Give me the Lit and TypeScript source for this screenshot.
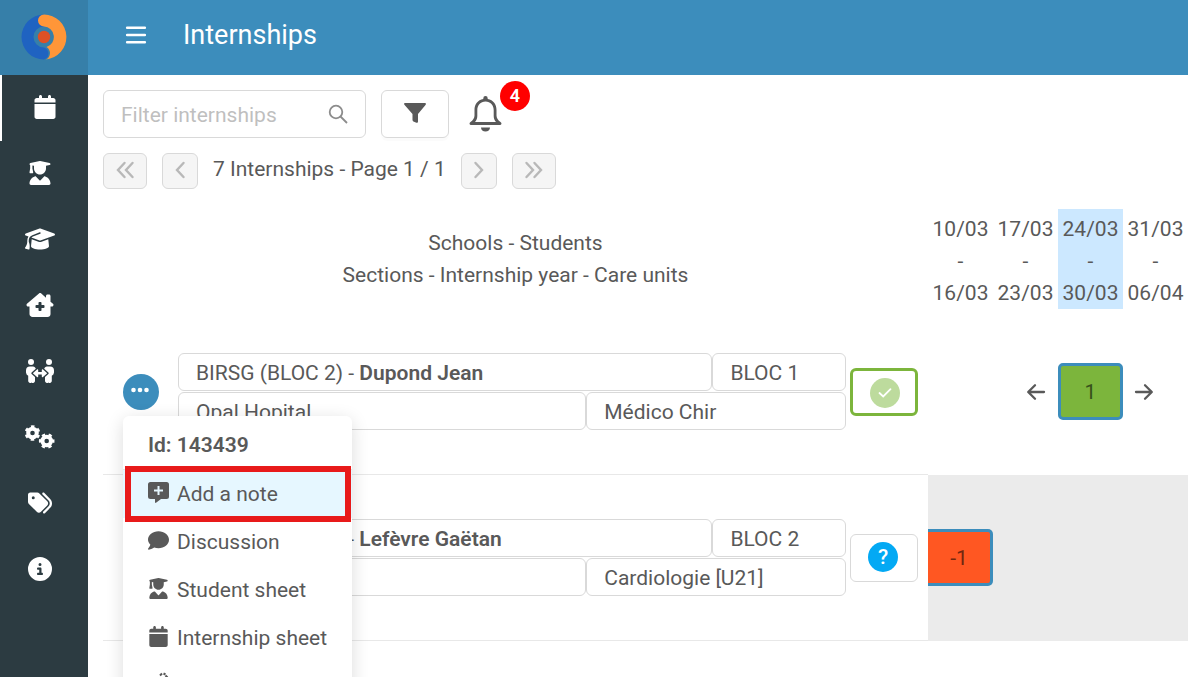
import { LitElement, html, css, svg } from "lit";
import { customElement, property } from "lit/decorators.js";
import { classMap } from "lit/directives/class-map.js";

const icons: Record<string, { box: string; body: unknown }> = {
  calendar: {
    box: "0 0 448 512",
    body: svg`<path d="M96 32V64H48C21.500 64 0 85.500 0 112v48H448V112c0-26.500-21.500-48-48-48H352V32c0-17.700-14.300-32-32-32s-32 14.300-32 32V64H160V32c0-17.700-14.300-32-32-32S96 14.300 96 32zM448 192H0V464c0 26.500 21.500 48 48 48H400c26.500 0 48-21.500 48-48V192z"/>`,
  },
  student: {
    box: "0 0 448 512",
    body: svg`<path d="M219.300 .500c3.100-.600 6.300-.600 9.400 0l200 40C439.900 42.700 448 52.600 448 64s-8.100 21.300-19.300 23.500L352 102.900V160c0 70.700-57.300 128-128 128S96 230.700 96 160V102.900L62 96v62.400l17 82.400c.9 4.700-.3 9.600-3.300 13.300s-7.600 5.900-12.400 5.900H16c-4.800 0-9.300-2.100-12.400-5.900s-4.300-8.600-3.300-13.300L14 158.400V86.600C4.500 83.300 0 74.300 0 64C0 52.600 8.100 42.700 19.300 40.500l200-40zM111.900 328.700c10.500-3.400 21.800 .400 29.400 8.500l71 75.500c6.300 6.700 17 6.700 23.300 0l71-75.500c7.600-8.100 18.900-11.900 29.400-8.500C401 348.600 448 409.400 448 481.300c0 17-13.800 30.700-30.700 30.700H30.700C13.800 512 0 498.200 0 481.300c0-71.900 47-132.700 111.900-152.600z"/>`,
  },
  cap: {
    box: "0 0 640 512",
    body: svg`<path d="M320 32c-8.100 0-16.100 1.400-23.700 4.100L15.800 137.400C6.300 140.900 0 149.900 0 160s6.300 19.100 15.800 22.600l57.900 20.900C57.300 229.300 48 259.800 48 291.900v28.100c0 28.400-10.800 57.700-22.300 80.800c-6.500 13-13.900 25.800-22.500 37.600C0 442.700-.900 448.300 .900 453.400s6 8.900 11.200 10.200l64 16c4.200 1.100 8.700 .300 12.400-2s6.300-6.100 7.100-10.400c8.600-42.800 4.300-81.200-2.100-108.700C90.300 344.300 86 329.800 80 316.500V291.900c0-30.200 10.200-58.700 27.900-81.500c12.900-15.500 29.600-28 49.200-35.700l157-61.700c8.200-3.200 17.500 .800 20.700 9s-.800 17.500-9 20.700l-157 61.700c-12.400 4.900-23.300 12.400-32.200 21.600l159.600 57.600c7.600 2.700 15.600 4.100 23.700 4.100s16.100-1.400 23.700-4.100L624.200 182.600c9.500-3.400 15.800-12.500 15.800-22.600s-6.300-19.100-15.800-22.600L343.700 36.100C336.100 33.400 328.100 32 320 32zM128 408c0 35.300 86 72 192 72s192-36.700 192-72L496.700 262.600 354.500 314c-11.100 4-22.800 6-34.500 6s-23.500-2-34.500-6L143.300 262.600 128 408z"/>`,
  },
  house: {
    box: "0 0 576 512",
    body: svg`<path fill-rule="evenodd" d="M543.800 287.600c17 0 32-14 32-32.100 1-9-3-17-11-24L512 185V64c0-17.700-14.300-32-32-32H448c-17.700 0-32 14.300-32 32v36.700L309.500 7c-6-5-14-7-21-7s-15 1-22 8L10 231.500c-7 7-10 15-10 24 0 18 14 32.100 32 32.100h32V448c0 35.300 28.700 64 64 64H448.500c35.500 0 64.200-28.800 64-64.300l-.700-160.200h32zM256 208c0-8.800 7.200-16 16-16h32c8.800 0 16 7.200 16 16v48h48c8.800 0 16 7.200 16 16v32c0 8.800-7.200 16-16 16H320v48c0 8.800-7.200 16-16 16H272c-8.800 0-16-7.200-16-16V320H208c-8.800 0-16-7.200-16-16V272c0-8.800 7.200-16 16-16h48V208z"/>`,
  },
  people: {
    box: "0 0 28 24",
    body: svg`<circle cx="5" cy="3" r="3"/><circle cx="23" cy="3" r="3"/><path d="M4 7.500h3c1.500 0 2.500 1 2.800 2.300L5.600 13.500a1 1 0 0 0 0 1.400L9 18v4a2 2 0 0 1-3.400 1.400A2 2 0 0 1 2.200 22v-5.200A4 4 0 0 1 0 13.500v-2a4 4 0 0 1 4-4zM24 7.500h-3c-1.500 0-2.500 1-2.800 2.300l4.200 3.700a1 1 0 0 1 0 1.400L19 18v4a2 2 0 0 0 3.400 1.400A2 2 0 0 0 25.800 22v-5.200a4 4 0 0 0 2.200-3.300v-2a4 4 0 0 0-4-4z"/><path d="M6.800 14.200 11 10.400c.600-.500 1.200-.200 1.200.500V13h3.600v-2.100c0-.700.600-1 1.200-.500l4.200 3.800L17 18c-.600.500-1.200.200-1.200-.500v-2.100h-3.600v2.100c0 .700-.600 1-1.200.500z"/>`,
  },
  gears: {
    box: "0 0 30 24",
    body: svg`<g fill="none" stroke="currentColor"><circle cx="7.500" cy="8" r="4.300" stroke-width="4"/><circle cx="7.500" cy="8" r="6.600" stroke-width="2.400" stroke-dasharray="3.400 3.510" stroke-dashoffset="1.700" transform="rotate(30 7.500 8)"/><circle cx="21.700" cy="16" r="4.300" stroke-width="4"/><circle cx="21.700" cy="16" r="6.600" stroke-width="2.400" stroke-dasharray="3.400 3.510" stroke-dashoffset="1.700"/></g>`,
  },
  tags: {
    box: "0 -32 512 512",
    body: svg`<path d="M345 7.300 472.800 136.600c52.400 53 52.400 138.200 0 191.200L360.800 441c-9.300 9.400-24.500 9.500-33.900.200s-9.500-24.500-.200-33.900L438.600 294.100c33.900-34.300 33.900-89.400 0-123.700L310.900 41c-9.300-9.400-9.200-24.600.200-33.900S335.700-2.200 345 7.300zM0 197.500V48C0 21.500 21.500 0 48 0h149.500c17 0 33.300 6.700 45.300 18.700l168 168c25 25 25 65.500 0 90.500L277.300 410.700c-25 25-65.500 25-90.500 0l-168-168C6.700 230.700 0 214.500 0 197.500zM144 112a32 32 0 1 0-64 0 32 32 0 1 0 64 0z" fill-rule="evenodd"/>`,
  },
  info: {
    box: "0 0 512 512",
    body: svg`<path fill-rule="evenodd" d="M256 512A256 256 0 1 0 256 0a256 256 0 1 0 0 512zM216 336h24V272H216c-13.300 0-24-10.700-24-24s10.700-24 24-24h48c13.300 0 24 10.700 24 24v88h8c13.300 0 24 10.700 24 24s-10.700 24-24 24H216c-13.300 0-24-10.700-24-24s10.700-24 24-24zm40-208a32 32 0 1 1 0 64 32 32 0 1 1 0-64z"/>`,
  },
  bars: {
    box: "0 0 18 18",
    body: svg`<path d="M1 2.500h16M1 9h16M1 15.500h16" fill="none" stroke="currentColor" stroke-width="2.200" stroke-linecap="round"/>`,
  },
  search: {
    box: "0 0 20 20",
    body: svg`<g fill="none" stroke="currentColor" stroke-width="1.800"><circle cx="8" cy="8" r="6.300"/><path d="m12.500 12.500 6.500 6.500"/></g>`,
  },
  filter: {
    box: "0 0 22 20",
    body: svg`<path d="M1 0h20c1 0 1.200.900.700 1.700L14 11v7.500c0 1-.700 1.500-1.600 1.200l-3-1.200c-.600-.300-.9-.700-.9-1.400V11L.4 1.700C-.2.900 0 0 1 0z"/>`,
  },
  bell: {
    box: "0 0 32 36",
    body: svg`<path d="M16 0a2.200 2.200 0 0 0-2.200 2.200v.8C8.200 4 5 8.500 5 14v5.500c0 2.600-1.400 4.700-4.300 6.800-1.200 1-.7 2.700.8 2.700h29c1.500 0 2-1.700.8-2.700-2.900-2.100-4.300-4.200-4.300-6.800V14c0-5.500-3.200-10-8.800-11v-.8A2.200 2.200 0 0 0 16 0zm0 5.500c5 0 8.200 3.700 8.200 8.500v6c0 2.300.8 4.300 2.300 6h-21c1.500-1.700 2.300-3.700 2.300-6v-6c0-4.800 3.200-8.500 8.200-8.500zM11.500 31.500h9c0 2.500-2 4-4.500 4s-4.500-1.500-4.500-4z" fill-rule="evenodd"/>`,
  },
  left: {
    box: "0 0 10 18",
    body: svg`<path d="M8.500 2 2 9l6.500 7" fill="none" stroke="currentColor" stroke-width="2.400" stroke-linecap="round"/>`,
  },
  right: {
    box: "0 0 10 18",
    body: svg`<path d="M1.500 2 8 9l-6.500 7" fill="none" stroke="currentColor" stroke-width="2.400" stroke-linecap="round"/>`,
  },
  first: {
    box: "0 0 18 18",
    body: svg`<path d="M8.500 2 2 9l6.500 7M16.500 2 10 9l6.500 7" fill="none" stroke="currentColor" stroke-width="2.400" stroke-linecap="round"/>`,
  },
  last: {
    box: "0 0 18 18",
    body: svg`<path d="M1.500 2 8 9l-6.500 7M9.500 2 16 9l-6.500 7" fill="none" stroke="currentColor" stroke-width="2.400" stroke-linecap="round"/>`,
  },
  back: {
    box: "0 0 18 16",
    body: svg`<path d="M17 8H1.500M8 1.200 1.200 8 8 14.800" fill="none" stroke="currentColor" stroke-width="2.300" stroke-linecap="round" stroke-linejoin="round"/>`,
  },
  forward: {
    box: "0 0 18 16",
    body: svg`<path d="M1 8h15.500M10 1.200 16.800 8 10 14.800" fill="none" stroke="currentColor" stroke-width="2.300" stroke-linecap="round" stroke-linejoin="round"/>`,
  },
  dots: {
    box: "0 0 18 6",
    body: svg`<circle cx="2.500" cy="3" r="2.300"/><circle cx="9" cy="3" r="2.300"/><circle cx="15.500" cy="3" r="2.300"/>`,
  },
  check: {
    box: "0 0 14 10",
    body: svg`<path d="m1.500 5 3.700 3.500 7.300-7.300" fill="none" stroke="currentColor" stroke-width="1.800" stroke-linecap="round"/>`,
  },
  note: {
    box: "0 0 21 21",
    body: svg`<path fill-rule="evenodd" d="M2.500 0h16A2.500 2.500 0 0 1 21 2.500v12a2.500 2.500 0 0 1-2.500 2.500H13l-5 3.800c-.5.300-1 0-1-.5V17H2.500A2.500 2.500 0 0 1 0 14.500v-12A2.500 2.500 0 0 1 2.500 0zM9.500 4v3.500H6v2h3.500V13h2V9.500H15v-2h-3.500V4z"/>`,
  },
  comment: {
    box: "0 0 512 450",
    body: svg`<path d="M512 208c0 114.900-114.600 208-256 208-37.100 0-72.300-6.400-104.100-17.900-11.900 8.700-31.300 20.600-54.300 30.600C73.600 439.100 44.700 448 16 448c-6.500 0-12.300-3.900-14.800-9.900s-1.100-12.800 3.400-17.400c9-9.800 24-28 36.500-53.600 7.300-14.800 12.800-30.200 14.700-44.600C21.400 290.300 0 250.800 0 208 0 93.100 114.600 0 256 0s256 93.100 256 208z"/>`,
  },
  sign: {
    box: "0 0 21 21",
    body: svg`<path d="M2 19 13 4M8 19 19 5M12 1.500l2-2M15.500-.5l2 1M17.500 1.500l2 2" fill="none" stroke="currentColor" stroke-width="2"/>`,
  },
};

@customElement("app-icon")
export class AppIcon extends LitElement {
  @property() name = "";

  static styles = css`
    :host {
      display: inline-flex;
      flex: none;
    }
    .glyph {
      width: 100%;
      height: 100%;
      fill: currentColor;
      overflow: visible;
    }
  `;

  render() {
    const icon = icons[this.name];
    return icon ? html`<svg class="glyph" viewBox=${icon.box} aria-hidden="true">${icon.body}</svg>` : null;
  }
}

interface Week {
  from: string;
  to: string;
  current?: boolean;
}

interface Internship {
  section: string;
  student: string;
  year: string;
  place: string;
  unit: string;
  status: "ok" | "ask";
  open?: boolean;
}

const weeks: Week[] = [
  { from: "10/03", to: "16/03" },
  { from: "17/03", to: "23/03" },
  { from: "24/03", to: "30/03", current: true },
  { from: "31/03", to: "06/04" },
];

const internships: Internship[] = [
  { section: "BIRSG (BLOC 2)", student: "Dupond Jean", year: "BLOC 1", place: "Opal Hopital", unit: "Médico Chir", status: "ok", open: true },
  { section: "BIRSG (BLOC 2)", student: "Lefèvre Gaëtan", year: "BLOC 2", place: "", unit: "Cardiologie [U21]", status: "ask" },
];

const navigation = [
  ["calendar", "Internships"],
  ["student", "Students"],
  ["cap", "Schools"],
  ["house", "Care units"],
  ["people", "Exchanges"],
  ["gears", "Settings"],
  ["tags", "Tags"],
  ["info", "Information"],
];

const actions = [
  ["note", "Add a note"],
  ["comment", "Discussion"],
  ["student", "Student sheet"],
  ["calendar", "Internship sheet"],
];

@customElement("app-root")
export class AppRoot extends LitElement {
  static styles = css`
    :host {
      display: grid;
      grid-template-columns: 88px minmax(0, 1fr);
      grid-template-rows: 75px minmax(0, 1fr);
      height: 100vh;
      overflow: hidden;
      background: #fff;
      color: #595959;
      font-family: Roboto, "Liberation Sans", sans-serif;
      font-size: 21px;
      line-height: 32px;
    }
    * {
      box-sizing: border-box;
    }
    button,
    input {
      font: inherit;
      color: inherit;
      background: none;
      border: 0;
      margin: 0;
      padding: 0;
    }
    b {
      font-weight: 600;
    }
    .brand {
      display: flex;
      align-items: center;
      justify-content: center;
      padding: 0 1px 2px 0;
      background: #367fa9;
    }
    .logo {
      width: 46px;
      height: 46px;
    }
    .topbar {
      display: flex;
      align-items: center;
      gap: 37px;
      padding: 0 38px 6px;
      background: #3c8dbc;
      color: #fff;
    }
    .burger {
      display: flex;
    }
    .burger app-icon {
      width: 20px;
      height: 20px;
    }
    .title {
      margin: 0;
      font-size: 27px;
      font-weight: 400;
    }
    .sidebar {
      background: #2c3b41;
      color: #fff;
    }
    .nav-link {
      display: flex;
      align-items: center;
      justify-content: center;
      height: 66px;
      padding: 0 8px 2px 0;
      color: inherit;
    }
    .nav-link.active {
      padding-right: 0;
      border-left: 2px solid #fff;
    }
    .nav-link app-icon {
      width: 30px;
      height: 24px;
    }
    .content {
      min-width: 0;
      padding: 15px 0 0 15px;
    }
    .toolbar {
      display: flex;
      align-items: center;
      gap: 15px;
    }
    .search {
      display: flex;
      align-items: center;
      width: 263px;
      height: 48px;
      padding: 0 17px;
      border: 1px solid #d9d9d9;
      border-radius: 6px;
    }
    .search-input {
      flex: 1;
      min-width: 0;
      padding-top: 2px;
      outline: 0;
    }
    .search-input::placeholder {
      color: #bfbfbf;
      opacity: 1;
    }
    .search app-icon {
      width: 20px;
      height: 20px;
      color: #8c8c8c;
    }
    .filter {
      display: flex;
      align-items: center;
      justify-content: center;
      width: 68px;
      height: 48px;
      padding: 0 1px 3px 0;
      border: 1px solid #d9d9d9;
      border-radius: 6px;
      box-shadow: 0 3px 0 rgba(0, 0, 0, 0.015);
    }
    .filter app-icon {
      width: 22px;
      height: 20px;
    }
    .alerts {
      position: relative;
      display: flex;
      margin-left: 5px;
    }
    .alerts app-icon {
      width: 33px;
      height: 36px;
    }
    .count {
      position: absolute;
      left: 31px;
      top: -15px;
      width: 30px;
      height: 30px;
      border-radius: 15px;
      background: #f00;
      color: #fff;
      font-size: 18px;
      font-weight: 600;
      line-height: 30px;
      text-align: center;
    }
    .pager {
      display: flex;
      align-items: center;
      gap: 15px;
      margin-top: 15px;
    }
    .page-button {
      display: flex;
      align-items: center;
      justify-content: center;
      width: 36px;
      height: 36px;
      padding-bottom: 3px;
      border: 1px solid #d9d9d9;
      border-radius: 6px;
      background: #f5f5f5;
      color: #b8b8b8;
    }
    .page-button.wide {
      width: 44px;
    }
    .page-button app-icon {
      height: 18px;
    }
    .page-label {
      padding-bottom: 4px;
    }
    .board {
      width: 100%;
      margin-top: 20px;
      table-layout: fixed;
      border-collapse: separate;
      border-spacing: 0;
    }
    .board th,
    .board td {
      padding: 0;
      font-weight: 400;
      text-align: center;
    }
    .week-col {
      width: 65px;
    }
    .heading {
      height: 100px;
    }
    .board .week-name {
      padding: 4px 0 0;
    }
    .line {
      display: block;
    }
    .week-name.current {
      background: #cce8ff;
    }
    .board .details {
      height: 166px;
      border-bottom: 1px solid #e8e8e8;
    }
    .board .slot-cell {
      padding-bottom: 2px;
    }
    .entry {
      display: flex;
      align-items: center;
      gap: 4px;
      padding: 0 10px 0 20px;
      text-align: left;
    }
    .menu-anchor {
      position: relative;
      margin-right: 15px;
    }
    .more {
      display: flex;
      align-items: center;
      justify-content: center;
      width: 36px;
      height: 36px;
      padding: 0 2px 3px 0;
      border-radius: 18px;
      background: #3c8dbc;
      color: #fff;
    }
    .more app-icon {
      width: 18px;
      height: 6px;
    }
    .fields {
      flex: 1;
      min-width: 0;
      display: grid;
      gap: 1px;
    }
    .pair {
      display: grid;
      grid-template-columns: 4fr 1fr;
    }
    .pair.place {
      grid-template-columns: 11fr 7fr;
    }
    .field {
      min-width: 0;
      height: 38px;
      padding: 3px 17px 0;
      border: 1px solid #d9d9d9;
      border-radius: 6px;
      overflow: hidden;
      white-space: nowrap;
    }
    .state {
      display: flex;
      align-items: center;
      justify-content: center;
      width: 68px;
      height: 48px;
      padding: 0 2px 2px 0;
      border: 1px solid #d9d9d9;
      border-radius: 6px;
    }
    .state.ok {
      padding: 2px 0 0 2px;
      border: 3px solid #7cb53c;
    }
    .mark {
      display: flex;
      align-items: center;
      justify-content: center;
      width: 30px;
      height: 30px;
      border-radius: 15px;
      background: #03a9f4;
      color: #fff;
      font-weight: 500;
    }
    .ok .mark {
      background: #bddb9d;
    }
    .mark app-icon {
      width: 14px;
      height: 10px;
    }
    .shift {
      display: flex;
      width: 100%;
      padding: 0 12px;
    }
    .shift.back {
      padding-right: 13px;
      justify-content: flex-end;
    }
    .shift app-icon {
      width: 18px;
      height: 16px;
    }
    .slot {
      display: block;
      height: 57px;
      border: 3px solid #3c8dbc;
      border-radius: 5px;
      background: #7cb53c;
      color: #37511b;
      line-height: 53px;
    }
    .slot.short {
      border-left: 0;
      border-radius: 0 5px 5px 0;
      background: #ff5722;
      color: #73270f;
    }
    .closed {
      background: #ebebeb;
    }
    .menu {
      position: absolute;
      z-index: 2;
      top: 42px;
      left: 0;
      width: 229px;
      padding: 5px 0;
      border-radius: 6px;
      background: #fff;
      box-shadow: 0 4px 18px rgba(0, 0, 0, 0.14);
    }
    .menu-id {
      padding: 8px 25px;
      border-bottom: 1px solid #e8e8e8;
      font-weight: 600;
    }
    .action {
      display: flex;
      align-items: center;
      gap: 8px;
      width: 100%;
      height: 48px;
      padding: 0 25px;
      white-space: nowrap;
    }
    .action app-icon {
      width: 21px;
      height: 21px;
      margin-bottom: 2px;
    }
    .action.marked {
      position: relative;
      background: #e6f7ff;
    }
    .action.marked::after {
      content: "";
      position: absolute;
      inset: -4px 1px -4px 2px;
      border: 6px solid #e81a1a;
    }
  `;

  private menu() {
    return html`
      <div class="menu" role="menu">
        <div class="menu-id">Id: 143439</div>
        ${actions.map(
          ([icon, label], index) => html`
            <button class=${classMap({ action: true, marked: index === 0 })} role="menuitem">
              <app-icon name=${icon}></app-icon>${label}
            </button>
          `,
        )}
        <button class="action" role="menuitem" aria-label="Sign"><app-icon name="sign"></app-icon></button>
      </div>
    `;
  }

  private entry(item: Internship) {
    return html`
      <div class="entry">
        <div class="menu-anchor">
          <button class="more" aria-label="Actions"><app-icon name="dots"></app-icon></button>
          ${item.open ? this.menu() : null}
        </div>
        <div class="fields">
          <div class="pair">
            <div class="field">${item.section} - <b>${item.student}</b></div>
            <div class="field">${item.year}</div>
          </div>
          <div class="pair place">
            <div class="field">${item.place}</div>
            <div class="field">${item.unit}</div>
          </div>
        </div>
        <button class=${classMap({ state: true, ok: item.status === "ok" })} aria-label="Status">
          <span class="mark">${item.status === "ok" ? html`<app-icon name="check"></app-icon>` : "?"}</span>
        </button>
      </div>
    `;
  }

  render() {
    return html`
      <div class="brand">
        <svg class="logo" viewBox="0 0 46 46" aria-hidden="true">
          <path d="M23 .5a22.500 22.500 0 0 0 0 45a6.300 6.300 0 0 0 0-12a10.300 10.300 0 0 1 0-21z" fill="#1f63c1" />
          <path d="M23 .5a22.500 22.500 0 0 1 2 44.900c2.500-1 4-3.400 4-6.400 0-2.600-1.500-4.800-3.500-6A10.500 10.500 0 0 0 23 12.500a6 6 0 0 1 0-12z" fill="#ff9638" />
          <circle cx="23" cy="23" r="6.200" fill="#dd5126" />
        </svg>
      </div>
      <header class="topbar">
        <button class="burger" aria-label="Toggle navigation"><app-icon name="bars"></app-icon></button>
        <h1 class="title">Internships</h1>
      </header>
      <nav class="sidebar">
        ${navigation.map(
          ([icon, label], index) => html`
            <a class=${classMap({ "nav-link": true, active: index === 0 })} href="#" aria-label=${label}>
              <app-icon name=${icon}></app-icon>
            </a>
          `,
        )}
      </nav>
      <main class="content">
        <div class="toolbar">
          <label class="search">
            <input class="search-input" type="text" placeholder="Filter internships" aria-label="Filter internships" />
            <app-icon name="search"></app-icon>
          </label>
          <button class="filter" aria-label="Filters"><app-icon name="filter"></app-icon></button>
          <button class="alerts" aria-label="Notifications">
            <app-icon name="bell"></app-icon><span class="count">4</span>
          </button>
        </div>
        <div class="pager">
          <button class="page-button wide" disabled aria-label="First page"><app-icon name="first"></app-icon></button>
          <button class="page-button" disabled aria-label="Previous page"><app-icon name="left"></app-icon></button>
          <span class="page-label">7 Internships - Page 1 / 1</span>
          <button class="page-button" disabled aria-label="Next page"><app-icon name="right"></app-icon></button>
          <button class="page-button wide" disabled aria-label="Last page"><app-icon name="last"></app-icon></button>
        </div>
        <table class="board">
          <colgroup>
            <col />
            ${weeks.map(() => html`<col class="week-col" />`)}
          </colgroup>
          <thead>
            <tr>
              <th class="heading" scope="col">
                <span class="line">Schools - Students</span>
                <span class="line">Sections - Internship year - Care units</span>
              </th>
              ${weeks.map(
                (week) => html`
                  <th class=${classMap({ "week-name": true, current: !!week.current })} scope="col">
                    <span class="line">${week.from}</span>
                    <span class="line">-</span>
                    <span class="line">${week.to}</span>
                  </th>
                `,
              )}
            </tr>
          </thead>
          <tbody>
            <tr>
              <td class="details">${this.entry(internships[0])}</td>
              <td></td>
              <td><button class="shift back" aria-label="Earlier"><app-icon name="back"></app-icon></button></td>
              <td class="slot-cell"><span class="slot">1</span></td>
              <td><button class="shift" aria-label="Later"><app-icon name="forward"></app-icon></button></td>
            </tr>
            <tr>
              <td class="details">${this.entry(internships[1])}</td>
              <td class="closed slot-cell"><span class="slot short">-1</span></td>
              <td class="closed"></td>
              <td class="closed"></td>
              <td class="closed"></td>
            </tr>
          </tbody>
        </table>
      </main>
    `;
  }
}
